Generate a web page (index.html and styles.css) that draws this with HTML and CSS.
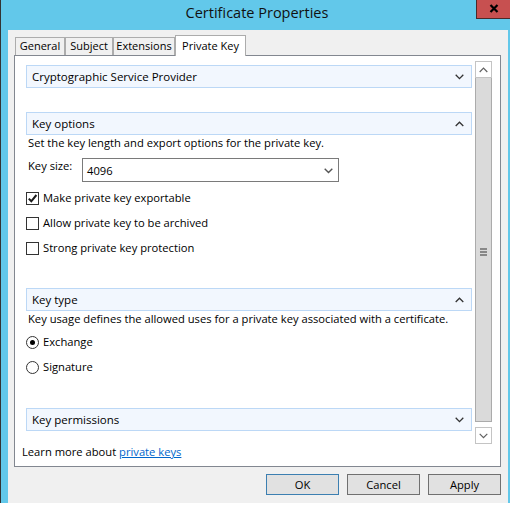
FILE: index.html
```html
<!DOCTYPE html>
<html>
<head>
<meta charset="utf-8">
<title>Certificate Properties</title>
<link rel="stylesheet" href="styles.css">
</head>
<body>
<div class="window">
  <div class="titlebar">
    <span class="title">Certificate Properties</span>
    <div class="close">
      <svg width="10" height="9" viewBox="0 0 10 9"><path d="M1.5 1 L8.5 8 M8.5 1 L1.5 8" stroke="#000" stroke-width="2.2" fill="none"/></svg>
    </div>
  </div>
  <div class="client">
    <div class="tabs">
      <div class="tab t-general">General</div>
      <div class="tab t-subject">Subject</div>
      <div class="tab t-ext">Extensions</div>
      <div class="tab active t-pk">Private Key</div>
    </div>
    <div class="panel">
      <div class="scrollarea">
        <div class="content">
          <div class="section-head">
            <span>Cryptographic Service Provider</span>
            <svg class="chev" width="9" height="6" viewBox="0 0 9 6"><path d="M0.7 0.8 L4.5 4.6 L8.3 0.8" stroke="#333" stroke-width="1.3" fill="none"/></svg>
          </div>
          <div class="section-head sec-options">
            <span>Key options</span>
            <svg class="chev" width="9" height="6" viewBox="0 0 9 6"><path d="M0.7 5 L4.5 1.2 L8.3 5" stroke="#333" stroke-width="1.3" fill="none"/></svg>
          </div>
          <p class="desc">Set the key length and export options for the private key.</p>
          <div class="keysize">
            <span class="ks-label">Key size:</span>
            <div class="select">
              <span>4096</span>
              <svg width="9" height="6" viewBox="0 0 9 6"><path d="M0.7 0.8 L4.5 4.6 L8.3 0.8" stroke="#555" stroke-width="1.4" fill="none"/></svg>
            </div>
          </div>
          <div class="checks">
            <div class="check-row">
              <span class="box"><svg width="11" height="11" viewBox="0 0 11 11"><path d="M1.8 5.6 L4.3 8.3 L9.4 2" stroke="#1a1a1a" stroke-width="2" fill="none"/></svg></span>
              <span>Make private key exportable</span>
            </div>
            <div class="check-row">
              <span class="box"></span>
              <span>Allow private key to be archived</span>
            </div>
            <div class="check-row">
              <span class="box"></span>
              <span>Strong private key protection</span>
            </div>
          </div>
          <div class="section-head sec-type">
            <span>Key type</span>
            <svg class="chev" width="9" height="6" viewBox="0 0 9 6"><path d="M0.7 5 L4.5 1.2 L8.3 5" stroke="#333" stroke-width="1.3" fill="none"/></svg>
          </div>
          <p class="desc">Key usage defines the allowed uses for a private key associated with a certificate.</p>
          <div class="radios">
            <div class="check-row">
              <span class="radio on"><span class="dot"></span></span>
              <span>Exchange</span>
            </div>
            <div class="check-row">
              <span class="radio"></span>
              <span>Signature</span>
            </div>
          </div>
          <div class="section-head sec-perm">
            <span>Key permissions</span>
            <svg class="chev" width="9" height="6" viewBox="0 0 9 6"><path d="M0.7 0.8 L4.5 4.6 L8.3 0.8" stroke="#333" stroke-width="1.3" fill="none"/></svg>
          </div>
        </div>
        <div class="scrollbar">
          <div class="sb-btn">
            <svg width="9" height="6" viewBox="0 0 9 6"><path d="M0.7 5 L4.5 1.2 L8.3 5" stroke="#606060" stroke-width="1.2" fill="none"/></svg>
          </div>
          <div class="sb-thumb">
            <svg width="7" height="8" viewBox="0 0 7 8"><path d="M0 1 H7 M0 4 H7 M0 7 H7" stroke="#6d6d6d" stroke-width="1.4"/></svg>
          </div>
          <div class="sb-btn">
            <svg width="9" height="6" viewBox="0 0 9 6"><path d="M0.7 0.8 L4.5 4.6 L8.3 0.8" stroke="#606060" stroke-width="1.2" fill="none"/></svg>
          </div>
        </div>
      </div>
      <div class="learn">Learn more about <a href="#">private keys</a></div>
    </div>
    <div class="buttons">
      <button class="btn default">OK</button>
      <button class="btn">Cancel</button>
      <button class="btn">Apply</button>
    </div>
  </div>
</div>
</body>
</html>
```

FILE: styles.css
```css
* { box-sizing: border-box; }
html, body { margin: 0; padding: 0; background: #fff; }
body {
  width: 510px;
  height: 520px;
  overflow: hidden;
  font-family: "Open Sans", "Noto Sans", sans-serif;
  font-size: 11.2px;
  color: #000;
}
.window {
  width: 510px;
  height: 503px;
  background: #62c8ea;
  border-left: 1px solid #333;
  padding: 0 2px 0 7px;
  display: flex;
  flex-direction: column;
}
.titlebar {
  position: relative;
  height: 30px;
  margin: 0 -2px 0 -7px;
  display: flex;
  justify-content: center;
  padding-top: 4px;
}
.title {
  font-size: 14.5px;
  color: #111;
  line-height: 18px;
  padding-left: 3px;
}
.close {
  position: absolute;
  top: 0;
  right: 0;
  width: 34px;
  height: 19px;
  background: #c75050;
  border-left: 1px solid #4a2a2a;
  border-bottom: 1px solid #4a2a2a;
  display: flex;
  align-items: center;
  justify-content: center;
}
.close svg { margin-top: -2px; }
.client {
  flex: 1;
  background: #f0f0f0;
  padding: 5px 7px 0 6px;
  display: flex;
  flex-direction: column;
}
.tabs {
  height: 20px;
  display: flex;
  align-items: flex-end;
  padding-left: 1px;
}
.tab {
  height: 18px;
  border: 1px solid #acacac;
  border-bottom: none;
  background: #f0f0f0;
  padding: 0;
  text-align: center;
  line-height: 16px;
  font-size: 11px;
  white-space: nowrap;
}
.t-general { width: 50px; }
.t-subject { width: 48px; }
.t-ext { width: 62px; margin-right: 0; }
.t-pk { width: 71px; }
.tab.active {
  height: 21px;
  margin-bottom: -1px;
  background: #fff;
  position: relative;
  z-index: 1;
  padding-top: 1px;
  line-height: 17px;
}
.panel {
  height: 412px;
  background: #fff;
  border: 1px solid #828790;
  padding: 5px 8px 6px 7px;
  display: flex;
  flex-direction: column;
}
.scrollarea {
  height: 383px;
  display: flex;
  gap: 3px;
}
.content {
  flex: 1;
  padding: 4px 0 0 4px;
  display: flex;
  flex-direction: column;
}
.section-head {
  height: 23px;
  border: 1px solid #bcd8f6;
  background: #f2f7fe;
  display: flex;
  align-items: center;
  justify-content: space-between;
  padding: 0 7px 0 5px;
  font-size: 11.5px;
  flex-shrink: 0;
}
.section-head .chev { margin-top: 1px; }
.sec-options { margin-top: 24px; }
.sec-type { margin-top: 27px; }
.sec-perm { margin-top: 28px; }
.desc {
  margin: 0;
  padding-left: 2px;
  line-height: 16px;
  height: 16px;
  white-space: nowrap;
}
.keysize {
  margin-top: 7px;
  display: flex;
  align-items: flex-start;
  height: 24px;
}
.ks-label {
  width: 56px;
  padding-left: 2px;
  line-height: 16px;
}
.select {
  width: 257px;
  height: 24px;
  border: 1px solid #7a7a7a;
  background: #fff;
  display: flex;
  align-items: center;
  justify-content: space-between;
  padding: 0 5px 0 4px;
}
.select svg { margin-top: 1px; }
.checks { margin-top: 4px; display: flex; flex-direction: column; }
.radios { margin-top: 3px; display: flex; flex-direction: column; }
.check-row {
  height: 25px;
  display: flex;
  align-items: center;
  gap: 4px;
  line-height: 14px;
}
.check-row > span:last-child { margin-top: -2px; }
.box {
  width: 13px;
  height: 13px;
  border: 1px solid #333;
  background: #fff;
  display: flex;
  align-items: center;
  justify-content: center;
}
.radio {
  width: 13px;
  height: 13px;
  border: 1px solid #333;
  border-radius: 50%;
  background: #fff;
  display: flex;
  align-items: center;
  justify-content: center;
}
.dot {
  width: 5px;
  height: 5px;
  border-radius: 50%;
  background: #000;
}
.scrollbar {
  width: 17px;
  display: flex;
  flex-direction: column;
}
.sb-btn {
  height: 17px;
  border: 1px solid #c4c4c4;
  background: #fff;
  display: flex;
  align-items: center;
  justify-content: center;
}
.sb-thumb {
  flex: 1;
  background: #dadada;
  border-left: 1px solid #ababab;
  border-right: 1px solid #ababab;
  border-bottom: 1px solid #ababab;
  margin-bottom: 5px;
  display: flex;
  align-items: center;
  justify-content: center;
  padding-top: 4px;
}
.learn {
  line-height: 16px;
  height: 16px;
  white-space: nowrap;
}
.learn a { color: #0066cc; text-decoration: underline; }
.buttons {
  margin-top: 7px;
  display: flex;
  justify-content: flex-end;
  gap: 8px;
}
.btn {
  width: 73px;
  height: 21px;
  background: #e1e1e1;
  border: 1px solid #707070;
  font-family: "Open Sans", "Noto Sans", sans-serif;
  font-size: 11.2px;
  color: #000;
  padding: 0;
  line-height: 18px;
}
.btn.default { border-color: #3c7fb1; }
```
